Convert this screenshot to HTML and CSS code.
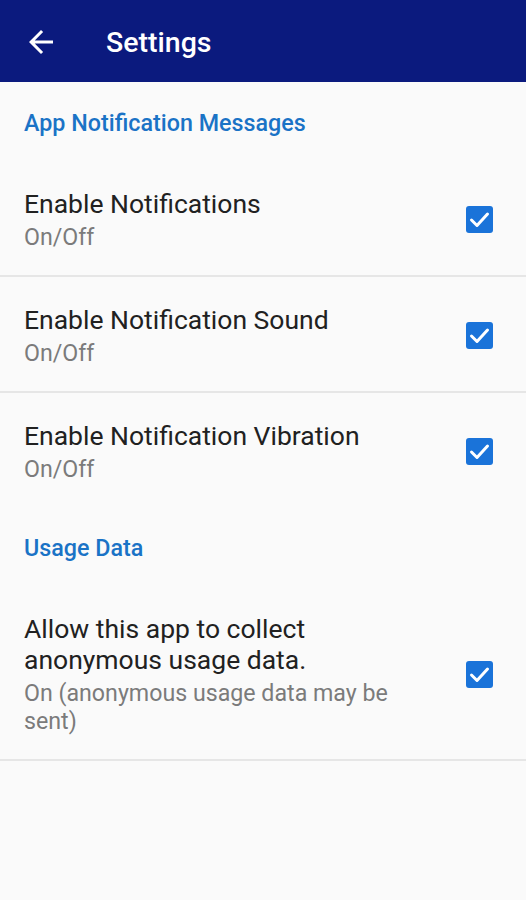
FILE: index.html
```html
<!DOCTYPE html>
<html><head>
<title>Settings</title>
<link rel="stylesheet" href="styles.css">
<meta http-equiv="content-type" content="text/html; charset=UTF-8">
</head>
<body>

<div class="appbar">
  <svg class="back" width="36" height="36" viewBox="0 0 24 24"><path fill="#fff" d="M20 11H7.83l5.59-5.59L12 4l-8 8 8 8 1.41-1.41L7.83 13H20v-2z"/></svg>
  <div class="title">Settings</div>
</div>

<div class="section">App Notification Messages</div>

<div class="row divided">
  <div class="text">
    <div class="label">Enable Notifications</div>
    <div class="summary">On/Off</div>
  </div>
  <svg class="check" width="27" height="27" viewBox="0 0 27 27"><rect width="27" height="27" rx="3" fill="#1a73d9"/><path fill="none" stroke="#fff" stroke-width="3" stroke-linecap="round" stroke-linejoin="round" d="M5.5 14l5.5 5.5L21.5 8"/></svg>
</div>

<div class="row divided">
  <div class="text">
    <div class="label">Enable Notification Sound</div>
    <div class="summary">On/Off</div>
  </div>
  <svg class="check" width="27" height="27" viewBox="0 0 27 27"><rect width="27" height="27" rx="3" fill="#1a73d9"/><path fill="none" stroke="#fff" stroke-width="3" stroke-linecap="round" stroke-linejoin="round" d="M5.5 14l5.5 5.5L21.5 8"/></svg>
</div>

<div class="row">
  <div class="text">
    <div class="label">Enable Notification Vibration</div>
    <div class="summary">On/Off</div>
  </div>
  <svg class="check" width="27" height="27" viewBox="0 0 27 27"><rect width="27" height="27" rx="3" fill="#1a73d9"/><path fill="none" stroke="#fff" stroke-width="3" stroke-linecap="round" stroke-linejoin="round" d="M5.5 14l5.5 5.5L21.5 8"/></svg>
</div>

<div class="section">Usage Data</div>

<div class="row divided">
  <div class="text">
    <div class="label">Allow this app to collect anonymous usage data.</div>
    <div class="summary">On (anonymous usage data may be sent)</div>
  </div>
  <svg class="check" width="27" height="27" viewBox="0 0 27 27"><rect width="27" height="27" rx="3" fill="#1a73d9"/><path fill="none" stroke="#fff" stroke-width="3" stroke-linecap="round" stroke-linejoin="round" d="M5.5 14l5.5 5.5L21.5 8"/></svg>
</div>

</body></html>
```

FILE: styles.css
```css
body {
    margin: 0;
    background: #fafafa;
    font-family: Roboto, "Noto Sans", sans-serif;
    min-height: 900px;
}

.appbar {
    height: 82px;
    background: #0b1a7e;
    display: flex;
    align-items: center;
}
.back { margin-left: 23px; margin-top: 2px; }
.title {
    color: #fff;
    font-size: 28.5px;
    font-weight: 500;
    margin-left: 47px;
    margin-top: 2px;
}

.section {
    color: #1a73c6;
    font-size: 23.3px;
    font-weight: 500;
    line-height: 28px;
    padding: 27px 24px 24px;
}

.row {
    display: flex;
    align-items: center;
    padding: 27px 33px 24px 24px;
}
.divided { border-bottom: 2px solid #e6e6e6; }
.text { flex: 1; padding-right: 40px; }
.label {
    color: #212121;
    font-size: 26.5px;
    line-height: 31px;
}
.summary {
    color: #7b7b7b;
    font-size: 23.2px;
    line-height: 28px;
    margin-top: 4px;
}

.check { flex: none; }
```
